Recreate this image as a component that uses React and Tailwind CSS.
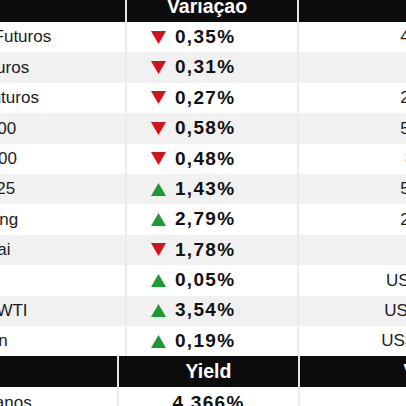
import React from "react";

const rows = [
  { label: "Dow Jones: Futuros", change: "0,35%", up: false, value: "42.350,10" },
  { label: "S&P 500 Futuros", change: "0,31%", up: false, value: "5.920" },
  { label: "FTSE 100 Futuros", change: "0,27%", up: false, value: "21.345,20" },
  { label: "Euro Stoxx 600", change: "0,58%", up: false, value: "51.765,32" },
  { label: "Índice S&P 500", change: "0,48%", up: false, value: "8.123,45" },
  { label: "JPX Nikkei 225", change: "1,43%", up: true, value: "53.290,10" },
  { label: "HSI Hang Seng", change: "2,79%", up: true, value: "24.120,56" },
  { label: "SSE Shanghai", change: "1,78%", up: false, value: "3.380,2" },
  { label: "Ouro", change: "0,05%", up: true, value: "US$ 2.342,10" },
  { label: "Petróleo US WTI", change: "3,54%", up: true, value: "US$ 72,15 bbl" },
  { label: "Moeda Bitcoin", change: "0,19%", up: true, value: "US$ 67.450,00" },
];

function Arrow({ up }) {
  return up ? (
    <svg width="15" height="13" viewBox="0 0 15 13" className="shrink-0">
      <polygon points="7.5,0 15,13 0,13" fill="#1e9a34" />
    </svg>
  ) : (
    <svg width="15" height="13" viewBox="0 0 15 13" className="shrink-0">
      <polygon points="0,0 15,0 7.5,13" fill="#d3121c" />
    </svg>
  );
}

export default function App() {
  return (
    <div
      className="w-[406px] h-[406px] overflow-hidden bg-white text-[#1c1c1c]"
      style={{ fontFamily: '"Liberation Sans", Arial, sans-serif' }}
    >
      {/* top table */}
      <div className="-ml-[110px] -mt-[9px] flex flex-col w-[793px]">
        <div className="flex h-[31px] bg-[#0c0c0c] text-white font-bold text-[19.5px]">
          <div className="w-[237px] border-r-2 border-[#e6e6e6] flex items-center pl-[10px]">Indicador</div>
          <div className="w-[172px] border-r-2 border-[#e6e6e6] flex items-center justify-center pr-[10px]">Variaçao</div>
          <div className="w-[278px] flex items-center justify-center">Valor</div>
        </div>
        {rows.map((r, i) => (
          <div
            key={i}
            className={`flex h-[30.4px] ${i % 2 === 1 ? "bg-[#f1f1f1]" : "bg-white"}`}
          >
            <div className="w-[237px] border-r-2 border-[#ececec] flex items-center pl-[10px] text-[17px] whitespace-nowrap">
              {r.label}
            </div>
            <div className="w-[172px] border-r-2 border-[#ececec] flex items-center gap-[9px] pl-[24px]">
              <Arrow up={r.up} />
              <span className="font-bold text-[19px] tracking-[1.3px] text-[#111]">{r.change}</span>
            </div>
            <div className="w-[278px] flex items-center justify-center text-[17px] whitespace-nowrap">
              {r.value}
            </div>
          </div>
        ))}
      </div>

      {/* bottom table */}
      <div className="-ml-[110px] flex flex-col w-[800px]">
        <div className="flex h-[31px] bg-[#0c0c0c] text-white font-bold text-[19.5px]">
          <div className="w-[229px] border-r-2 border-[#e6e6e6] flex items-center pl-[10px]">Título</div>
          <div className="w-[181px] border-r-2 border-[#e6e6e6] flex items-center justify-center">Yield</div>
          <div className="w-[287px] flex items-center justify-center">Variação</div>
        </div>
        <div className="flex h-[31px] bg-white">
          <div className="w-[229px] border-r-2 border-[#ececec] flex items-center pl-[10px] text-[17px] whitespace-nowrap">
            Treasury 10 anos
          </div>
          <div className="w-[181px] border-r-2 border-[#ececec] flex items-center justify-center font-bold text-[19px] tracking-[1.3px] text-[#111]">
            4,366%
          </div>
          <div className="w-[287px] flex items-center justify-center text-[17px]">+0,02</div>
        </div>
      </div>
    </div>
  );
}
